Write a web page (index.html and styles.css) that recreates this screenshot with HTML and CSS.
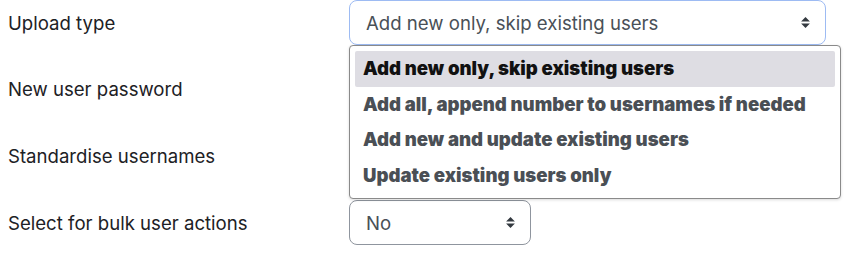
FILE: index.html
```html
<!DOCTYPE html>
<html lang="en">
<head>
    <meta charset="UTF-8">
    <title>Upload users</title>
    <link rel="stylesheet" href="styles.css">
</head>
<body>
    <div class="form">
        <div class="row">
            <div class="label">Upload type</div>
            <div class="control">
                <div class="select wide focused">
                    <span>Add new only, skip existing users</span>
                    <svg class="caret" viewBox="0 0 4 5" width="9" height="11"><path d="M2 0L0 2h4zm0 5L0 3h4z"/></svg>
                </div>
                <!-- open option list -->
                <ul class="menu">
                    <li class="active">Add new only, skip existing users</li>
                    <li>Add all, append number to usernames if needed</li>
                    <li>Add new and update existing users</li>
                    <li>Update existing users only</li>
                </ul>
            </div>
        </div>
        <div class="row">
            <div class="label">New user password</div>
            <div class="control"></div>
        </div>
        <div class="row">
            <div class="label">Standardise usernames</div>
            <div class="control"></div>
        </div>
        <div class="row">
            <div class="label">Select for bulk user actions</div>
            <div class="control">
                <div class="select narrow">
                    <span>No</span>
                    <svg class="caret" viewBox="0 0 4 5" width="9" height="11"><path d="M2 0L0 2h4zm0 5L0 3h4z"/></svg>
                </div>
            </div>
        </div>
    </div>
</body>
</html>
```

FILE: styles.css
```css
body {
    margin: 0;
    background: #fff;
    font-family: Inter, "Noto Sans", sans-serif;
    font-size: 18.6px;
    color: #1d2125;
}
.form {
    padding: 0 0 0 8px;
    display: flex;
    flex-direction: column;
    gap: 21.8px;
}
.row {
    display: flex;
    align-items: center;
    min-height: 45px;
}
.label {
    width: 341px;
}
.control {
    position: relative;
    height: 45px;
}
.select {
    box-sizing: border-box;
    height: 45px;
    border: 1px solid #8f959e;
    border-radius: 8px;
    padding: 0 15px 0 16px;
    display: flex;
    align-items: center;
    justify-content: space-between;
    color: #495057;
    background: #fff;
}
.select.wide {
    width: 477px;
}
.select.narrow {
    width: 182px;
}
.select.focused {
    border-color: #9dbbf3;
}
.caret {
    fill: #343a40;
}
.menu {
    position: absolute;
    top: 45px;
    left: 0;
    width: 492px;
    box-sizing: border-box;
    margin: 0;
    padding: 5px;
    list-style: none;
    background: #fff;
    border: 1px solid #8a8a8a;
    border-radius: 4px;
    box-shadow: 0 1px 3px rgba(0,0,0,0.15);
    z-index: 2;
}
.menu li {
    height: 35.5px;
    line-height: 35.5px;
    padding-left: 8px;
    font-weight: 900;
    color: #4a4f55;
    border-radius: 2px;
}
.menu li.active {
    background: #dedde3;
    color: #111;
}
```
